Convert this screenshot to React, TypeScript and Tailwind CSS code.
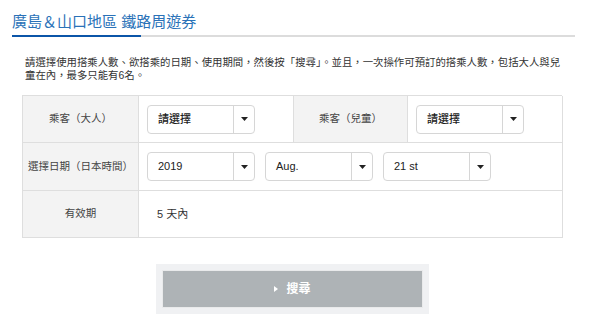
function Select({ value, bold }: { value: string; bold?: boolean }) {
  return (
    <div className="flex h-[29px] w-[108px] items-stretch rounded-[4px] border border-[#d6d6d6] bg-white">
      <div className={`flex flex-1 items-center pl-[10px] text-[11px] text-[#222] ${bold ? 'font-medium' : ''}`}>
        {value}
      </div>
      <div className="flex w-[21px] items-center justify-center border-l border-[#d6d6d6]">
        <svg width="7" height="4" viewBox="0 0 7 4">
          <path d="M0 0 L7 0 L3.5 4 Z" fill="#222" />
        </svg>
      </div>
    </div>
  )
}

function Label({ children }: { children: React.ReactNode }) {
  return (
    <div className="flex items-center justify-center border-b border-r border-[#dedede] bg-[#f3f3f3] text-[10.5px] text-[#444]">
      {children}
    </div>
  )
}

export default function App() {
  return (
    <div className="h-[333px] w-[600px] bg-white font-['Liberation_Sans','Noto_Sans_CJK_TC',sans-serif]">
      <div className="pl-[12px] pt-[12px]">
        <h1 className="text-[15px] leading-[20px] text-[#2a72b8]">廣島＆山口地區 鐵路周遊券</h1>
        <div className="mt-[3px] flex h-[2px] w-[563px]">
          <div className="w-[129px] bg-[#0b55a8]" />
          <div className="flex-1 bg-[#dcdcdc]" />
        </div>
      </div>

      <p className="ml-[25px] mt-[19px] w-[537px] text-[10.4px] leading-[13px] text-[#333]">
        請選擇使用搭乘人數、欲搭乘的日期、使用期間，然後按「搜尋」。並且，一次操作可預訂的搭乘人數，包括大人與兒童在內，最多只能有6名。
      </p>

      <div className="ml-[22px] mt-[13px] grid w-[540px] grid-cols-[116px_155px_114px_155px] grid-rows-[47px_48px_47px] border-l border-t border-[#dedede]">
        <Label>乘客（大人）</Label>
        <div className="flex items-center border-b border-r border-[#dedede] pl-[8px]">
          <Select value="請選擇" bold />
        </div>
        <Label>乘客（兒童）</Label>
        <div className="flex items-center border-b border-r border-[#dedede] pl-[8px]">
          <Select value="請選擇" bold />
        </div>

        <Label>選擇日期（日本時間）</Label>
        <div className="col-span-3 flex items-center gap-[10px] border-b border-r border-[#dedede] pl-[8px]">
          <Select value="2019" />
          <Select value="Aug." />
          <Select value="21 st" />
        </div>

        <Label>有效期</Label>
        <div className="col-span-3 flex items-center border-b border-r border-[#dedede] pl-[18px] text-[11px] text-[#333]">
          5 天內
        </div>
      </div>

      <div className="ml-[156px] mt-[26px] w-[273px] bg-[#f0f1f3] p-[6px]">
        <button className="flex h-[38px] w-full items-center justify-center gap-[8px] border border-[#e9eaeb] bg-[#aeb3b6] text-[12px] font-bold text-white">
          <svg width="4" height="6" viewBox="0 0 4 6">
            <path d="M0 0 L4 3 L0 6 Z" fill="#fff" />
          </svg>
          <span>搜尋</span>
        </button>
      </div>
    </div>
  )
}
